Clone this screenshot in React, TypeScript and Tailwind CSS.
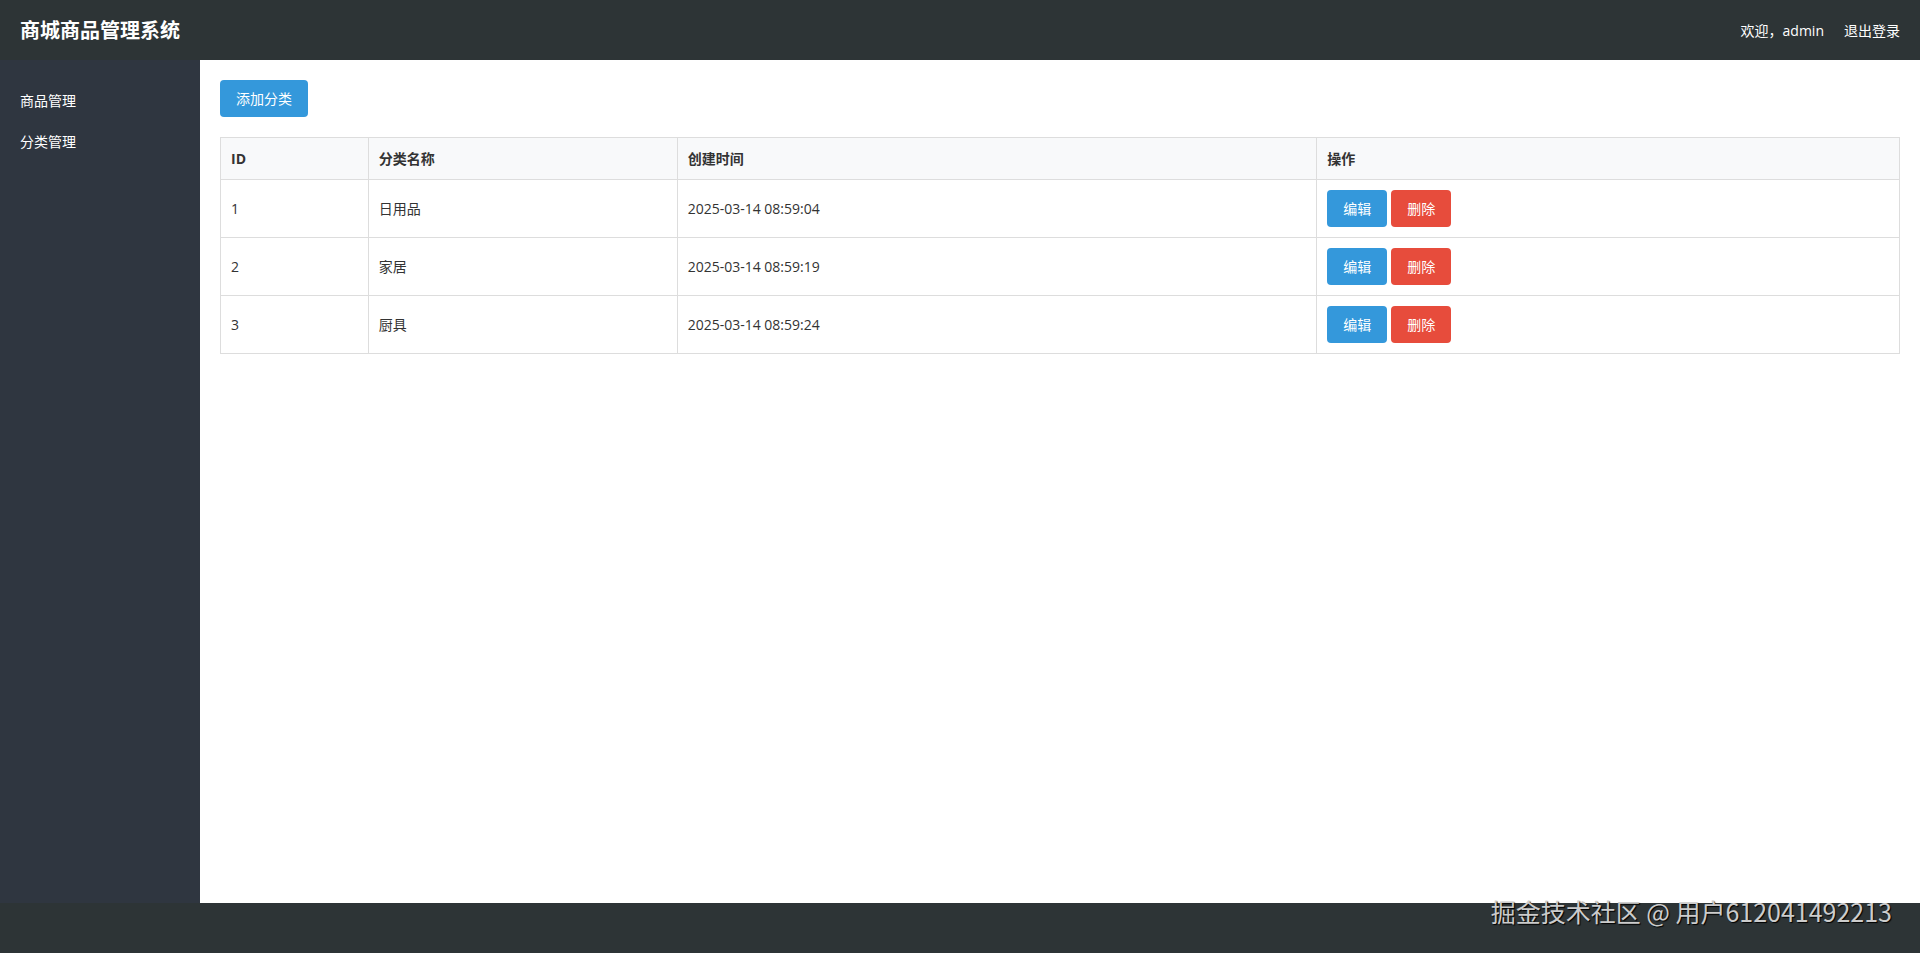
import { useState } from 'react';

interface Category {
  id: number;
  name: string;
  createdAt: string;
}

const initialCategories: Category[] = [
  { id: 1, name: '日用品', createdAt: '2025-03-14 08:59:04' },
  { id: 2, name: '家居', createdAt: '2025-03-14 08:59:19' },
  { id: 3, name: '厨具', createdAt: '2025-03-14 08:59:24' },
];

const menus = [
  { label: '商品管理', href: '#products' },
  { label: '分类管理', href: '#categories' },
];

function Header() {
  return (
    <header className="flex h-[60px] shrink-0 items-center justify-between bg-[#2d3436] px-5 text-white">
      <h1 className="font-['Noto_Sans_CJK_SC',sans-serif] text-xl leading-[30px] font-bold">商城商品管理系统</h1>
      <div className="flex items-center gap-5">
        <span>欢迎，admin</span>
        <a href="#logout" className="hover:underline">退出登录</a>
      </div>
    </header>
  );
}

function Sidebar() {
  return (
    <nav className="w-[200px] shrink-0 bg-[#2f3640] py-5 text-white">
      <ul>
        {menus.map((menu) => (
          <li key={menu.href}>
            <a href={menu.href} className="block px-5 py-[10px] hover:bg-[#3d4652]">
              {menu.label}
            </a>
          </li>
        ))}
      </ul>
    </nav>
  );
}

export default function App() {
  const [categories, setCategories] = useState<Category[]>(initialCategories);

  const handleDelete = (id: number) => {
    setCategories(categories.filter((c) => c.id !== id));
  };

  return (
    <div className="flex min-h-screen flex-col bg-white font-['Open_Sans','Noto_Sans_CJK_SC',sans-serif] text-sm leading-[21px] text-[#333]">
      <Header />

      <div className="flex flex-1">
        <Sidebar />

        <main className="min-w-0 flex-1 p-5">
          <button type="button" className="mb-5 block rounded bg-[#3498db] px-4 py-2 text-white hover:bg-[#2980b9]">
            添加分类
          </button>

          <table className="w-full table-fixed border-collapse">
            <thead>
              <tr className="bg-[#f8f9fa] text-left">
                <th className="w-[8.8%] border border-[#ddd] p-[10px] font-bold">ID</th>
                <th className="w-[18.4%] border border-[#ddd] p-[10px] font-bold">分类名称</th>
                <th className="w-[38.1%] border border-[#ddd] p-[10px] font-bold">创建时间</th>
                <th className="border border-[#ddd] p-[10px] font-bold">操作</th>
              </tr>
            </thead>
            <tbody>
              {categories.map((c) => (
                <tr key={c.id}>
                  <td className="border border-[#ddd] p-[10px]">{c.id}</td>
                  <td className="border border-[#ddd] p-[10px]">{c.name}</td>
                  <td className="border border-[#ddd] p-[10px]">{c.createdAt}</td>
                  <td className="border border-[#ddd] p-[10px]">
                    <div className="flex gap-1">
                      <button type="button" className="rounded bg-[#3498db] px-4 py-2 text-white hover:bg-[#2980b9]">
                        编辑
                      </button>
                      <button
                        type="button"
                        onClick={() => handleDelete(c.id)}
                        className="rounded bg-[#e74c3c] px-4 py-2 text-white hover:bg-[#c0392b]"
                      >
                        删除
                      </button>
                    </div>
                  </td>
                </tr>
              ))}
            </tbody>
          </table>
        </main>
      </div>

      <footer className="relative h-[50px] shrink-0 bg-[#2d3436]">
        {/* 水印，叠在页脚上沿 */}
        <p className="absolute right-7 -top-[10px] font-['Noto_Sans_CJK_SC',sans-serif] text-[25px] leading-9 whitespace-nowrap text-[#ccc] [text-shadow:1px_1px_1px_#000]">
          掘金技术社区 @ 用户612041492213
        </p>
      </footer>
    </div>
  );
}
